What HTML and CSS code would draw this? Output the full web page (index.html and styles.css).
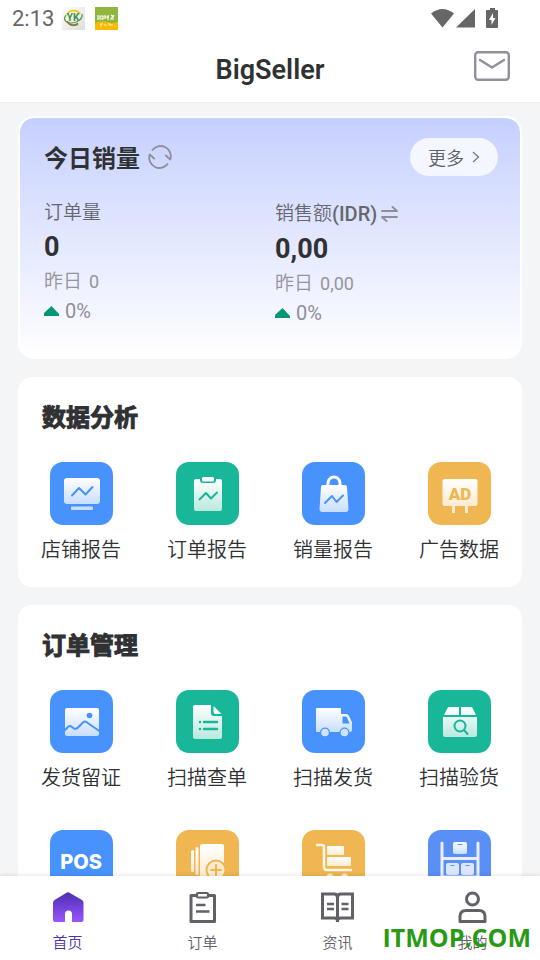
FILE: index.html
```html
<!DOCTYPE html>
<html lang="zh-CN">
<head>
<meta charset="utf-8">
<meta name="viewport" content="width=device-width, initial-scale=1">
<title>BigSeller</title>
<link rel="stylesheet" href="styles.css">
</head>
<body>
<svg class="defs" aria-hidden="true">
  <defs>
    <linearGradient id="blue" x1="0" y1="0" x2="0" y2="1"><stop offset="0" stop-color="#fff"/><stop offset="1" stop-color="#c8deff"/></linearGradient>
    <linearGradient id="green" x1="0" y1="0" x2="0" y2="1"><stop offset="0" stop-color="#fff"/><stop offset="1" stop-color="#b9e9df"/></linearGradient>
    <linearGradient id="amber" x1="0" y1="0" x2="0" y2="1"><stop offset="0" stop-color="#fff"/><stop offset="1" stop-color="#fbebd0"/></linearGradient>
    <linearGradient id="home" x1="0" y1="0" x2="0" y2="1"><stop offset="0" stop-color="#4a2fb0"/><stop offset="1" stop-color="#9a55ff"/></linearGradient>
    <linearGradient id="grey" x1="0" y1="0" x2="1" y2="1"><stop offset="0" stop-color="#fff"/><stop offset="1" stop-color="#ddd"/></linearGradient>
  </defs>
</svg>

<header class="top">
  <div class="status">
    <time>2:13</time>
    <svg width="23" height="23" viewBox="0 0 23 23" aria-hidden="true">
      <rect width="23" height="23" fill="url(#grey)"/>
      <path d="M5 8a7 6 0 0 1 13-1" fill="none" stroke="#f0c21c" stroke-width="1.800"/>
      <path d="M5 14a7 6 0 0 0 11 3" fill="none" stroke="#e8502d" stroke-width="1.800"/>
      <path d="M4 8c-3 4-1 8 5 8s12-4 11-9M7 17c3 2 7 1 9-1" fill="none" stroke="#4c9b3c" stroke-width="1.200"/>
      <text x="11" y="14" class="logo-yk">YK</text>
    </svg>
    <svg class="status-second" width="23" height="23" viewBox="0 0 23 23" aria-hidden="true">
      <rect width="23" height="23" fill="#8fb63d"/>
      <path d="M0 16q6-3 12-1t11 0v8H0z" fill="#fcb900"/>
      <path d="M3 8v5M5 9h3v3H5zM10 8v4M10 10h4M13 8v5M16 8l3 2M19 8l-3 4h3" fill="none" stroke="#fff" stroke-width="1.200"/>
      <path d="M5 17h3M6 17v3M9 18h2v1M13 17h2v2M16 18h2" fill="none" stroke="#fff6d8"/>
    </svg>
    <svg class="status-icons" width="68" height="22" viewBox="0 0 68 22" fill="#666" aria-hidden="true">
      <path d="M0 5.500Q11.500-3.500 23 5.500L11.500 19.500z"/>
      <path d="M44 1v18.500H25z"/>
      <path fill-rule="evenodd" d="M59 0h5v2h2q1 0 1 1v16q0 1-1 1H56q-1 0-1-1V3q0-1 1-1h3zM62 5l-4 7h2.500v5l4-7H62z"/>
    </svg>
  </div>
  <div class="titlebar">
    <h1>BigSeller</h1>
    <button class="mail" type="button" aria-label="消息">
      <svg width="36" height="30" viewBox="0 0 36 30" fill="none" stroke="#918f9a" stroke-width="2.400" stroke-linecap="round" stroke-linejoin="round"><rect x="1.200" y="1.200" width="33.600" height="27.600" rx="3"/><path d="M6 9l12 7.500L30 9"/></svg>
    </button>
  </div>
</header>

<main class="content">
  <section class="sales">
    <div class="sales-head">
      <h2>今日销量</h2>
      <button class="plain" type="button" aria-label="刷新">
        <svg width="24" height="24" viewBox="0 0 24 24" fill="none" stroke="#8f8f98" stroke-width="1.800" stroke-linejoin="round"><path d="M4 5.500A10.300 10.300 0 0 1 22.300 14.500l-5-4.500M20 18.500A10.300 10.300 0 0 1 1.700 9.500l5 4.500"/></svg>
      </button>
      <button class="more" type="button">更多
        <svg width="8" height="12" viewBox="0 0 8 12" fill="none" stroke="#77777f" stroke-width="1.300"><path d="M1 1l5.500 5L1 11"/></svg>
      </button>
    </div>
    <div class="stats">
      <div>
        <p class="stat-label">订单量</p>
        <p class="stat-value">0</p>
        <p class="stat-prev">昨日 <span>0</span></p>
        <p class="stat-rate"><svg width="16" height="10" viewBox="0 0 16 10"><path d="M7.500 0l7.500 8v2H-1V8z" fill="#069876"/></svg>0%</p>
      </div>
      <div>
        <p class="stat-label stat-label-tall">销售额<b>(IDR)</b>
          <button class="plain" type="button" aria-label="切换币种"><svg width="17" height="17" viewBox="0 0 17 17" fill="none" stroke="#8f8f98" stroke-width="1.900" stroke-linecap="round" stroke-linejoin="round"><path d="M1 5h15L11.500 1M16 11H1l4.500 4"/></svg></button>
        </p>
        <p class="stat-value">0,00</p>
        <p class="stat-prev">昨日 <span>0,00</span></p>
        <p class="stat-rate"><svg width="16" height="10" viewBox="0 0 16 10"><path d="M7.500 0l7.500 8v2H-1V8z" fill="#069876"/></svg>0%</p>
      </div>
    </div>
  </section>

  <section class="panel">
    <h2>数据分析</h2>
    <div class="tiles">
      <a class="tile" href="#">
        <svg class="blue" viewBox="0 0 63 63"><rect x="14" y="16" width="36" height="26" rx="3" fill="url(#blue)"/><rect x="21" y="44.500" width="22" height="3.500" rx="1" fill="#c8deff"/><path class="thin" d="M22 33.500l7-7.500 6.500 6.500 7-7.500"/></svg>
        <span>店铺报告</span>
      </a>
      <a class="tile" href="#">
        <svg class="green" viewBox="0 0 63 63"><rect x="18" y="17" width="28" height="32" rx="2" fill="url(#green)"/><path d="M24 16v2q0 3 3 3h10q3 0 3-3v-2z" fill="#19b799"/><rect x="26" y="15" width="12" height="4.500" rx="1.500" fill="#fff"/><path class="thin" d="M23.500 37.500l6.500-6.500 5 5.500 6-6"/></svg>
        <span>订单报告</span>
      </a>
      <a class="tile" href="#">
        <svg class="blue" viewBox="0 0 63 63"><path d="M26 25v-4a6 6 0 0 1 12 0v4" fill="none" stroke="#fff" stroke-width="3"/><path d="M21 23h22q2 0 2 2l1.500 22q0 3-3 3h-23q-3 0-3-3L19 25q0-2 2-2z" fill="url(#blue)"/><path class="thin" d="M23 41l7-7 4.500 6 6.500-6.500"/></svg>
        <span>销量报告</span>
      </a>
      <a class="tile" href="#">
        <svg class="amber" viewBox="0 0 63 63"><path d="M25.500 43v8M38.500 43v8" stroke="#fbebd0" stroke-width="3"/><rect x="14.500" y="17" width="35" height="27" rx="2" fill="url(#amber)"/><text class="ad" x="32" y="37.500">AD</text></svg>
        <span>广告数据</span>
      </a>
    </div>
  </section>

  <section class="panel">
    <h2>订单管理</h2>
    <div class="tiles">
      <a class="tile" href="#">
        <svg class="blue" viewBox="0 0 63 63"><rect x="15" y="18" width="34" height="28" rx="2" fill="url(#blue)"/><circle cx="39.500" cy="25.500" r="2.800" fill="#4892fe"/><path class="thin" d="M14 41l4-4q2-2 4 0l2 1.500q2 1 4-1l5-5q2-2 4 0L50 41.500"/></svg>
        <span>发货留证</span>
      </a>
      <a class="tile" href="#">
        <svg class="green" viewBox="0 0 63 63"><path d="M19 15h16v8q0 3 3 3h8v21q0 2-2 2H19q-2 0-2-2V17q0-2 2-2z" fill="url(#green)"/><path d="M37.500 16l8 8h-6q-2 0-2-2z" fill="#f2fbf9"/><path class="line" d="M24 32h0M28 32h13M24 39h0M28 39h13"/></svg>
        <span>扫描查单</span>
      </a>
      <a class="tile" href="#">
        <svg class="blue" viewBox="0 0 63 63"><path d="M15 18h23q1 0 1 1v5h5q2 0 3 2l3 6v8q0 2-2 2H15q-1 0-1-1V19q0-1 1-1z" fill="url(#blue)"/><path d="M40.500 26.500h3q1 0 1.500 1l2.500 6h-7z" fill="#4892fe"/><circle cx="23" cy="42.500" r="5" fill="#4892fe"/><circle cx="42.500" cy="42.500" r="5" fill="#4892fe"/><circle cx="23" cy="42.500" r="3.800" fill="#cfe2ff"/><circle cx="42.500" cy="42.500" r="3.800" fill="#cfe2ff"/></svg>
        <span>扫描发货</span>
      </a>
      <a class="tile" href="#">
        <svg class="green" viewBox="0 0 63 63"><path d="M21 17h10v8H16l3-6q.800-2 2-2zM33 17h10q1.500 0 2 2l3 6H33zM15 27h34v18q0 2-2 2H17q-2 0-2-2z" fill="url(#green)"/><circle class="thin" cx="32" cy="36" r="5.500"/><path class="thin" d="M36 40l3.500 4"/></svg>
        <span>扫描验货</span>
      </a>
      <a class="tile" href="#" aria-label="POS">
        <svg class="blue" viewBox="0 0 63 63"><text class="pos" x="31" y="39">POS</text></svg>
      </a>
      <a class="tile" href="#">
        <svg class="amber" viewBox="0 0 63 63"><rect x="15" y="20" width="3" height="22" rx="1.500" fill="url(#amber)"/><rect x="19.500" y="17" width="3" height="28" rx="1.500" fill="url(#amber)"/><rect x="24" y="14" width="24" height="34" rx="2" fill="url(#amber)"/><circle cx="40" cy="40" r="10.500" fill="#f0b651"/><circle cx="40" cy="40" r="8.500" fill="#fbebd0"/><path class="thin" d="M40 35v10M35 40h10"/></svg>
      </a>
      <a class="tile" href="#">
        <svg class="amber" viewBox="0 0 63 63"><rect x="25" y="16" width="17" height="9" rx="1" fill="url(#amber)"/><rect x="25" y="27" width="24" height="9" rx="1" fill="url(#amber)"/><path d="M15 15h5q2 0 2 2v20q0 3 3 3h24" fill="none" stroke="#fff6e6" stroke-width="2.500" stroke-linecap="round"/><circle cx="28" cy="47" r="3.500" fill="#fbebd0"/><circle cx="42.500" cy="47" r="3.500" fill="#fbebd0"/></svg>
      </a>
      <a class="tile" href="#">
        <svg class="indigo" viewBox="0 0 63 63"><path d="M14 13v37M50 13v37M14 28.500h36M14 47h36" stroke="#e9efff" stroke-width="3" stroke-linecap="round"/><rect x="25" y="12" width="14" height="12" rx="2" fill="url(#blue)"/><rect x="18" y="33" width="13" height="12" rx="2" fill="#dde8ff"/><rect x="33" y="33" width="13" height="12" rx="2" fill="#dde8ff"/><path class="hair" d="M30 14.500h4M23 35.500h3M38 35.500h3"/></svg>
      </a>
    </div>
  </section>
</main>

<nav class="tabs">
  <a class="tab active" href="#" aria-current="page">
    <svg width="36" height="34" viewBox="0 0 36 34"><path d="M17 1.500q1-.600 2 0L32 9q1.500 1 1.500 3v17q0 2-2 2H22v-8q0-3.500-3.500-3.500T15 23v8H5q-2 0-2-2V12q0-2 1.500-3z" fill="url(#home)"/></svg>
    首页</a>
  <a class="tab" href="#">
    <svg width="36" height="34" viewBox="0 0 36 34" fill="none" stroke="#626168" stroke-width="3" stroke-linejoin="round"><path d="M12 4.500H6v26h23.500v-26H23"/><rect x="12" y="2" width="11" height="4.500" rx="1" stroke-width="2.200"/><path d="M11 14h9.500M11 20.500h13.500" stroke-width="2.600"/></svg>
    订单</a>
  <a class="tab" href="#">
    <svg width="36" height="34" viewBox="0 0 36 34" fill="none" stroke="#626168" stroke-width="3"><path d="M17.500 31V7q0-4-3-4H2.500v24h12q3 0 3 3V7q0-4 3-4h12v24h-12q-3 0-3 3"/><path d="M7 13h7M7 18h7M21.500 13h7M21.500 18h7" stroke-width="2.600"/></svg>
    资讯</a>
  <a class="tab" href="#">
    <svg width="36" height="34" viewBox="0 0 36 34" fill="none" stroke="#626168" stroke-width="3" stroke-linejoin="round"><circle cx="17.500" cy="8" r="6"/><path d="M5 30.500v-5q0-6 6-6h13q6 0 6 6v5z"/></svg>
    我的</a>
  <div class="watermark">ITMOP.COM</div>
</nav>
</body>
</html>
```
FILE: styles.css
```css
* {
  box-sizing: border-box;
}

body {
  display: flex;
  flex-direction: column;
  height: 100vh;
  margin: 0;
  background: #f4f5f7;
  color: #303133;
  font-family: Roboto, "Noto Sans CJK SC", sans-serif;
}

h1, h2, p {
  margin: 0;
}

a {
  color: inherit;
  text-decoration: none;
}

button {
  padding: 0;
  border: 0;
  background: none;
  color: inherit;
  font: inherit;
}

svg {
  display: block;
  flex-shrink: 0;
}

.defs {
  position: absolute;
  width: 0;
  height: 0;
}

.top {
  flex-shrink: 0;
  border-bottom: 1px solid #ebedef;
  background: #fff;
}

.status {
  display: flex;
  align-items: center;
  height: 37px;
  padding: 0 41px 0 12px;
  color: #666;
  font-size: 22px;
}

.status time {
  width: 50px;
}

.status-second {
  margin-left: 10px;
}

.status-icons {
  margin-left: auto;
}

.logo-yk {
  fill: #3d9140;
  font-size: 10px;
  font-weight: 700;
  text-anchor: middle;
}

.titlebar {
  display: grid;
  grid-template-columns: 1fr auto 1fr;
  align-items: center;
  height: 65px;
  padding: 0 30px;
}

.titlebar h1 {
  grid-column: 2;
  font-size: 27px;
  font-weight: 600;
  line-height: 36px;
}

.mail {
  justify-self: end;
  padding-bottom: 8px;
}

.content {
  display: flex;
  flex: 1;
  flex-direction: column;
  gap: 18px;
  min-height: 0;
  padding: 13px 18px 18px;
  overflow-y: auto;
  scrollbar-width: none;
}

.sales {
  flex-shrink: 0;
  padding: 19px 22px 30px 24px;
  border: 2px solid #fff;
  border-radius: 16px;
  background: linear-gradient(#c6d0ff, #fff) padding-box, #fff;
}

.sales-head {
  display: flex;
  align-items: center;
  gap: 8px;
  margin-bottom: 22px;
}

h2 {
  font-size: 24px;
  font-weight: 700;
  line-height: 36px;
}

.sales-head h2 {
  padding-top: 4px;
}

.more {
  display: flex;
  align-items: center;
  gap: 8px;
  height: 38px;
  margin-left: auto;
  padding: 0 18px;
  border-radius: 19px;
  background: #f4f7ff;
  color: #606166;
  font-size: 18px;
  font-weight: 350;
}

.stats {
  display: grid;
  grid-template-columns: 1fr 1fr;
  gap: 8px;
}

.stat-label {
  display: flex;
  align-items: center;
  color: #66666d;
  font-size: 19px;
  font-weight: 350;
  line-height: 28px;
}

.stat-label-tall {
  line-height: 30px;
}

.stat-label b {
  margin-right: 4px;
  font-size: 20px;
  font-weight: 500;
}

.stat-value {
  font-size: 27px;
  font-weight: 700;
  line-height: 40px;
}

.stat-prev {
  display: flex;
  gap: 7px;
  color: #94949c;
  font-size: 19px;
  font-weight: 350;
  line-height: 30px;
}

.stat-prev span {
  font-size: 18px;
  font-weight: 400;
}

.stat-rate {
  display: flex;
  align-items: center;
  gap: 5px;
  color: #8f8f97;
  font-size: 20px;
  line-height: 28px;
}

.panel {
  flex-shrink: 0;
  padding: 23px 0;
  border-radius: 14px;
  background: #fff;
}

.panel h2 {
  margin: 0 24px 26px;
  -webkit-text-stroke: 1px currentColor;
}

.tiles {
  display: grid;
  grid-template-columns: repeat(4, 1fr);
  row-gap: 38px;
}

.tile {
  display: flex;
  flex-direction: column;
  align-items: center;
  gap: 11px;
  font-size: 20px;
  font-weight: 350;
  line-height: 28px;
}

.tile svg {
  width: 63px;
  height: 63px;
  border-radius: 13px;
}

.blue {
  background: #4892fe;
  color: #4892fe;
}

.green {
  background: #19b799;
  color: #19b799;
}

.amber {
  background: #f0b651;
  color: #f0b651;
}

.indigo {
  background: #5a8ff6;
  color: #5a8ff6;
}

.line, .thin, .hair {
  fill: none;
  stroke: currentColor;
  stroke-width: 2.5px;
  stroke-linecap: round;
  stroke-linejoin: round;
}

.thin {
  stroke-width: 2px;
}

.hair {
  stroke-width: 1px;
}

.ad {
  fill: currentColor;
  font-size: 17px;
  font-weight: 900;
  text-anchor: middle;
}

.pos {
  fill: #fff;
  font-family: Inter, sans-serif;
  font-size: 20px;
  font-weight: 800;
  text-anchor: middle;
}

.tabs {
  position: relative;
  display: grid;
  flex-shrink: 0;
  grid-template-columns: repeat(4, 1fr);
  height: 84px;
  background: #fff;
  box-shadow: 0 -1px 4px rgba(0, 0, 0, 0.1);
}

.tab {
  display: flex;
  flex-direction: column;
  align-items: center;
  gap: 7px;
  padding-top: 15px;
  color: #626168;
  font-size: 15px;
  font-weight: 350;
  line-height: 22px;
}

.active {
  color: #4a35ad;
}

.watermark {
  position: absolute;
  right: 9px;
  bottom: 6px;
  color: #2a9a14;
  font-family: "Open Sans", sans-serif;
  font-size: 25px;
  font-weight: 700;
  line-height: 34px;
}
```
